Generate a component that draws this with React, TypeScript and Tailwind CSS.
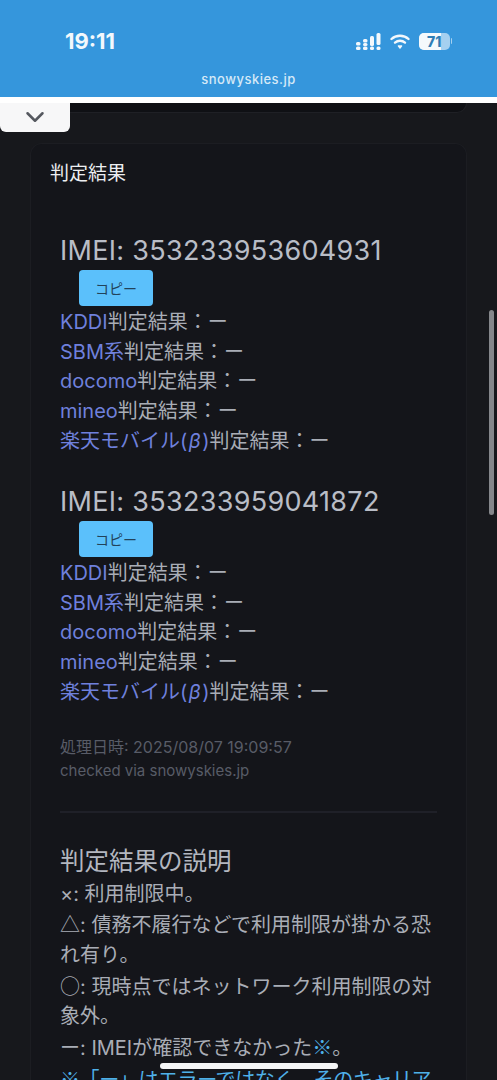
import type { ReactNode } from 'react';
import { ChevronDown } from 'lucide-react';

const jp = "font-['Inter','Noto_Sans_CJK_JP','Liberation_Sans',sans-serif]";

const carriers: { key: string; name: ReactNode }[] = [
  { key: 'kddi', name: 'KDDI' },
  { key: 'sbm', name: 'SBM系' },
  { key: 'docomo', name: 'docomo' },
  { key: 'mineo', name: 'mineo' },
  {
    key: 'rakuten',
    name: (
      <>
        楽天モバイル(<i className="mx-[1.5px]">β</i>)
      </>
    ),
  },
];

function Cjk({ children }: { children: ReactNode }) {
  return <span className="font-['Noto_Sans_CJK_JP',sans-serif]">{children}</span>;
}

function ImeiBlock({ imei }: { imei: string }) {
  return (
    <div>
      <h3 className="text-[27px] leading-[32px] text-[#b9bdc6] tracking-[0.3px]">IMEI: {imei}</h3>
      <button className="ml-[19px] mt-[3px] mb-[2px] block w-[74px] h-[36px] rounded-[4px] bg-[#5bc0fb] text-[14px] text-[#22425a]">
        コピー
      </button>
      {carriers.map((c) => (
        <div key={c.key} className="text-[20px] leading-[29.7px] text-[#a9adb6]">
          <span className="text-[#6f80dc]">{c.name}</span>判定結果：ー
        </div>
      ))}
    </div>
  );
}

function StatusIcons() {
  return (
    <div className="flex items-center gap-[9px]">
      {/* cellular dots */}
      <svg width="25" height="17" viewBox="0 0 25 17" fill="#f3f8fc">
        <rect x="0" y="9" width="4.5" height="3.5" rx="1.5" />
        <rect x="0" y="13.5" width="4.5" height="3.5" rx="1.5" />
        <rect x="7" y="6" width="4.5" height="3.5" rx="1.5" />
        <rect x="7" y="13.5" width="4.5" height="3.5" rx="1.5" />
        <rect x="7" y="10" width="4.5" height="3" rx="1.5" />
        <rect x="14" y="3" width="4" height="10" rx="1.5" />
        <rect x="14" y="13.5" width="4" height="3.5" rx="1.5" />
        <rect x="20.5" y="0" width="4" height="12" rx="1.5" />
        <rect x="20.5" y="13.5" width="4" height="3.5" rx="1.5" />
      </svg>
      {/* wifi */}
      <svg width="20" height="15" viewBox="0 0 20 15" fill="none" stroke="#f3f8fc" strokeWidth="2.4" strokeLinecap="round">
        <path d="M1.5 5 C6 0.7 14 0.7 18.5 5" />
        <path d="M5 8.6 C7.8 6.2 12.2 6.2 15 8.6" />
        <circle cx="10" cy="12.6" r="1.3" fill="#f3f8fc" stroke="none" />
        <path d="M8.6 12 L10 13.8 L11.4 12" strokeWidth="1.6" />
      </svg>
      {/* battery */}
      <div className="flex items-center gap-[1px]">
        <div className="relative w-[31px] h-[17px] rounded-[5px] bg-[#a5d0f0] overflow-hidden">
          <div className="h-full w-[22px] bg-[#f5f9fc]" />
          <span className="absolute inset-0 pl-[8px] text-[14px] leading-[17px] font-extrabold text-[#2f7db5]">71</span>
        </div>
        <div className="h-[6px] w-[1px] rounded-r-full bg-[#a5d0f0]" />
      </div>
    </div>
  );
}

export default function App() {
  return (
    <div className={`relative h-[1080px] w-[497px] overflow-hidden bg-[#17181c] ${jp}`}>
      {/* Browser header */}
      <header className="h-[97px] bg-[#3596dc] pt-[27px] flex flex-col">
        <div className="flex items-center justify-between pl-[65px] pr-[45px] h-[28px]">
          <span className="text-[22px] font-bold text-[#f3f8fc]">19:11</span>
          <StatusIcons />
        </div>
        <div className="mt-[15px] text-center text-[13px] leading-[18px] font-medium tracking-[0.5px] text-[#d5e9f7]">
          snowyskies.jp
        </div>
      </header>
      <div className="h-[6px] bg-white" />

      {/* Bottom of the card above */}
      <div className="mx-[30px] h-[10px] rounded-b-[12px] bg-[#0f1014] border-b border-r border-[#1f2025]" />

      {/* Result card */}
      <section className="mx-[30px] mt-[30px] h-[950px] rounded-t-[12px] border-x border-t border-[#1c1d22] bg-[#14151a] pl-[19px] pr-[29px] pt-[16px]">
        <h2 className="text-[19px] leading-[28px] text-[#eceef1]">判定結果</h2>

        <div className="pl-[10px] pt-[47px]">
          <ImeiBlock imei="353233953604931" />
          <div className="h-[29.5px]" />
          <ImeiBlock imei="353233959041872" />

          <div className="mt-[28px] leading-[23px] text-[#585c67]">
            <div className="text-[16px]">処理日時: 2025/08/07 19:09:57</div>
            <div className="text-[15px]">checked via snowyskies.jp</div>
          </div>

          <hr className="mt-[29px] border-t-2 border-[#1f2028]" />

          <h3 className="mt-[30px] text-[24.5px] leading-[37px] text-[#b3b7c0]">判定結果の説明</h3>
          <div className="w-[378px] text-[20px] leading-[29.7px] text-[#a9adb6]">
            <p>×: 利用制限中。</p>
            <p>
              <Cjk>△</Cjk>: 債務不履行などで利用制限が掛かる恐れ有り。
            </p>
            <p>
              <Cjk>○</Cjk>: 現時点ではネットワーク利用制限の対象外。
            </p>
            <p>
              ー: IMEIが確認できなかった<span className="text-[#4fb0e8]"><Cjk>※</Cjk></span>。
            </p>
            <p className="whitespace-nowrap tracking-[-0.4px] text-[#4fb0e8]">
              <Cjk>※</Cjk>「ー」はエラーではなく、そのキャリア
            </p>
          </div>
        </div>
      </section>

      {/* Collapse tab */}
      <div className="absolute left-0 top-[103px] flex h-[29px] w-[70px] justify-center rounded-b-[6px] bg-[#f7f7f8]">
        <ChevronDown className="-mt-[1px] text-[#55585f]" size={30} strokeWidth={2} />
      </div>

      {/* Scrollbar */}
      <div className="absolute left-[489px] top-[310px] h-[205px] w-[5px] rounded-full bg-[#85878b]" />

      {/* Home indicator */}
      <div className="absolute left-[160px] top-[1063px] h-[6px] w-[178px] rounded-full bg-[#f4f5f6]" />
    </div>
  );
}
